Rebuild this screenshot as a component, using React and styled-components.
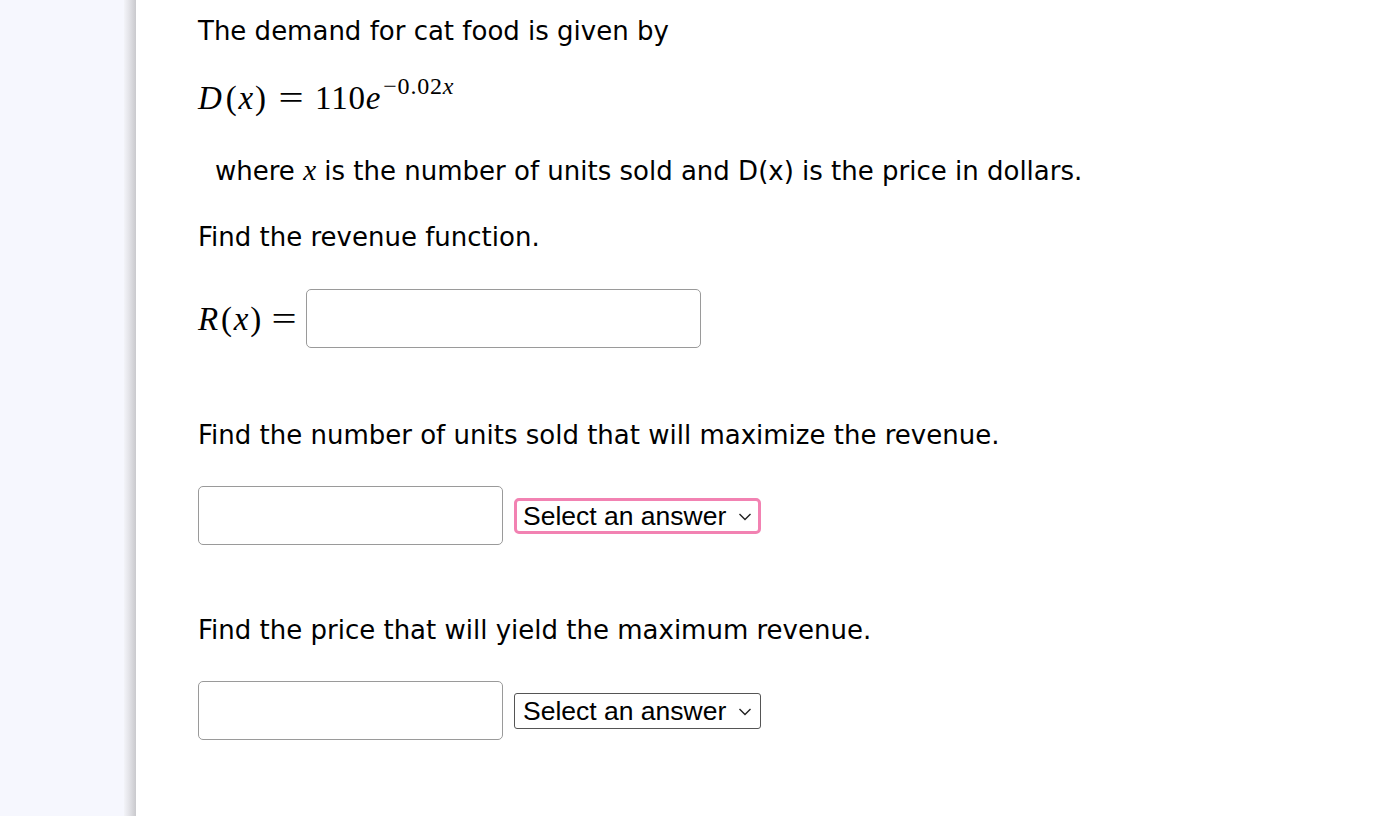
import React from "react";
import styled, { createGlobalStyle } from "styled-components";

const GlobalStyle = createGlobalStyle`
  html, body {
    margin: 0;
    padding: 0;
    background: #ffffff;
  }
  body {
    font-family: "DejaVu Sans", sans-serif;
    color: #000;
  }
`;

const Page = styled.div`
  display: flex;
  min-height: 816px;
`;

const Sidebar = styled.div`
  width: 124px;
  flex-shrink: 0;
  background: #f6f7fe;
`;

const Shadow = styled.div`
  width: 12px;
  flex-shrink: 0;
  background: linear-gradient(to right, #f3f4f9 0%, #e4e4e9 40%, #d2d2d6 80%, #c9c9cd 100%);
`;

const Main = styled.div`
  flex: 1;
  padding: 14px 0 0 62px;
`;

const Text = styled.p`
  margin: 0 0 ${(p) => p.mb || 0}px ${(p) => p.indent || 0}px;
  font-size: 26px;
  line-height: 34px;
`;

const MathLine = styled.div`
  font-family: "Liberation Serif", "DejaVu Serif", serif;
  font-size: 33px;
  line-height: 40px;
  letter-spacing: 0.8px;
  margin: 0 0 ${(p) => p.mb || 0}px;
  white-space: nowrap;
`;

const I = styled.span`
  font-family: "Liberation Serif", "DejaVu Serif", serif;
  font-style: italic;
  padding-right: ${(p) => p.pr || 0}px;
`;

const Paren = styled.span`
  padding: 0 1px;
`;

const Sup = styled.sup`
  font-size: 24px;
  vertical-align: 15px;
  line-height: 0;
  margin-left: 2px;
`;

const Eq = styled.span`
  display: inline-block;
  margin: 0 ${(p) => p.gap || 12}px;
  transform: scaleX(1.35);
`;

const Row = styled.div`
  display: flex;
  align-items: center;
  gap: ${(p) => p.gap || 0}px;
  margin: ${(p) => p.mt || 0}px 0 ${(p) => p.mb || 0}px;
`;

const AnswerBox = styled.input`
  box-sizing: border-box;
  width: ${(p) => p.w}px;
  height: 59px;
  border: 1.5px solid #9a9a9a;
  border-radius: 5px;
  background: #fff;
  font-size: 24px;
  padding: 0 10px;
  outline: none;
`;

const SelectWrap = styled.div`
  position: relative;
  display: inline-flex;
`;

const Select = styled.select`
  appearance: none;
  box-sizing: border-box;
  width: 247px;
  height: 36px;
  padding: 0 26px 0 ${(p) => (p.active ? 6 : 8)}px;
  font-family: "Liberation Sans", Arial, sans-serif;
  font-size: 26.5px;
  color: #000;
  background: #fff;
  border: ${(p) => (p.active ? "3px solid #f282b2" : "1px solid #555")};
  border-radius: ${(p) => (p.active ? 5 : 3)}px;
  outline: none;
`;

const Chevron = styled.svg`
  position: absolute;
  right: 9px;
  top: 50%;
  transform: translateY(-40%);
  pointer-events: none;
`;

function AnswerSelect({ active }) {
  return (
    <SelectWrap>
      <Select active={active} defaultValue="">
        <option value="">Select an answer</option>
        <option value="units">units</option>
        <option value="dollars">dollars</option>
      </Select>
      <Chevron width="14" height="9" viewBox="0 0 14 9">
        <path d="M1.5 1.5 L7 7 L12.5 1.5" fill="none" stroke="#222" strokeWidth="1.4" />
      </Chevron>
    </SelectWrap>
  );
}

export default function App() {
  return (
    <>
      <GlobalStyle />
      <Page>
        <Sidebar />
        <Shadow />
        <Main>
          <Text mb={30}>The demand for cat food is given by</Text>
          <MathLine mb={35}>
            <I pr={2}>D</I>
            <Paren>(</Paren>
            <I>x</I>
            <Paren>)</Paren>
            <Eq gap={14}>=</Eq>110<I>e</I>
            <Sup>
              −0.02<I>x</I>
            </Sup>
          </MathLine>
          <Text indent={17} mb={32}>
            where <I style={{ fontSize: 29 }}>x</I> is the number of units sold and D(x) is the price in dollars.
          </Text>
          <Text>Find the revenue function.</Text>
          <Row mt={35} mb={70}>
            <MathLine>
              <I pr={1}>R</I>
              <Paren>(</Paren>
              <I>x</I>
              <Paren>)</Paren>
              <Eq gap={12}>=</Eq>
            </MathLine>
            <AnswerBox w={395} />
          </Row>
          <Text>Find the number of units sold that will maximize the revenue.</Text>
          <Row gap={11} mt={34} mb={68}>
            <AnswerBox w={305} />
            <AnswerSelect active />
          </Row>
          <Text>Find the price that will yield the maximum revenue.</Text>
          <Row gap={11} mt={34}>
            <AnswerBox w={305} />
            <AnswerSelect />
          </Row>
        </Main>
      </Page>
    </>
  );
}
